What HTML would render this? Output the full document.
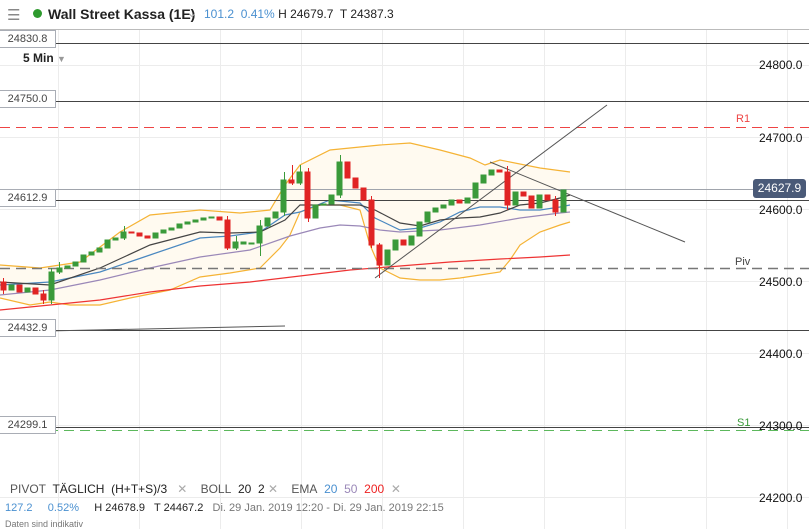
<!DOCTYPE html><html><head><meta charset="utf-8"><style>
body{margin:0;width:809px;height:529px;overflow:hidden;background:#fff;font-family:"Liberation Sans",sans-serif;position:relative}
.t{position:absolute;white-space:nowrap}
.lb{position:absolute;left:-1px;width:55px;height:16px;border:1px solid #a9adb5;background:#fff;font-size:11px;color:#444;text-align:center;line-height:16px}
.ax{position:absolute;left:759px;font-size:12px;color:#111}
</style></head><body>
<svg width="809" height="529" style="position:absolute;left:0;top:0">
<g stroke="#ececec" stroke-width="1">
<line x1="58.5" y1="29" x2="58.5" y2="529"/><line x1="139.5" y1="29" x2="139.5" y2="529"/><line x1="220.5" y1="29" x2="220.5" y2="529"/><line x1="301.5" y1="29" x2="301.5" y2="529"/><line x1="382.5" y1="29" x2="382.5" y2="529"/><line x1="463.5" y1="29" x2="463.5" y2="529"/><line x1="544.5" y1="29" x2="544.5" y2="529"/><line x1="625.5" y1="29" x2="625.5" y2="529"/><line x1="706.5" y1="29" x2="706.5" y2="529"/><line x1="787.5" y1="29" x2="787.5" y2="529"/>
<line x1="0" y1="65.5" x2="809" y2="65.5"/><line x1="0" y1="137.5" x2="809" y2="137.5"/><line x1="0" y1="209.5" x2="809" y2="209.5"/><line x1="0" y1="281.5" x2="809" y2="281.5"/><line x1="0" y1="353.5" x2="809" y2="353.5"/><line x1="0" y1="425.5" x2="809" y2="425.5"/><line x1="0" y1="497.5" x2="809" y2="497.5"/>
</g>
<line x1="0" y1="29.5" x2="809" y2="29.5" stroke="#bbb"/>
<polygon fill="#fffaf0" points="0,265 40,268 80,262 120,232 150,215 200,210 240,213 270,210 285,185 300,165 330,150 380,145 410,143 440,150 470,158 485,165 500,160 540,168 570,172 570,222 560,225 540,232 520,245 510,260 500,272 480,275 460,278 440,280 420,280 400,278 380,268 370,245 360,210 340,205 320,205 300,212 290,235 280,248 260,268 230,273 200,277 170,290 130,298 100,305 70,305 50,302 30,305 0,298"/>
<g fill="none" stroke-width="1.2">
<polyline stroke="#f5b335" points="0,265 40,268 80,262 120,232 150,215 200,210 240,213 270,210 285,185 300,165 330,150 380,145 410,143 440,150 470,158 485,165 500,160 540,168 570,172"/>
<polyline stroke="#f5b335" points="0,298 30,305 50,302 70,305 100,305 130,298 170,290 200,277 230,273 260,268 280,248 290,235 300,212 320,205 340,205 360,210 370,245 380,268 400,278 420,280 440,280 460,278 480,275 500,272 510,260 520,245 540,232 560,225 570,222"/>
<polyline stroke="#ee3333" points="0,310 50,305 100,300 150,292 200,286 250,282 300,276 350,270 400,266 450,262 500,259 540,257 570,255"/>
<polyline stroke="#9a88b8" points="0,295 50,290 100,280 150,268 200,257 250,250 290,236 320,228 340,225 360,226 380,230 400,232 440,230 480,225 520,218 560,213 570,212"/>
<polyline stroke="#4a88c0" points="0,285 50,282 100,272 150,255 200,238 230,236 260,232 285,215 300,212 330,200 360,203 375,218 400,230 420,228 440,222 460,212 480,207 500,207 520,210 540,210 560,207 570,205"/>
<polyline stroke="#444" points="0,282 50,285 100,268 150,245 200,232 230,233 260,232 285,220 300,205 330,205 360,205 375,210 400,223 420,226 440,220 460,218 480,217 500,213 520,205 540,203 560,198 570,195"/>
</g>
<g stroke="#444" stroke-width="1">
<line x1="0" y1="43.5" x2="809" y2="43.5"/><line x1="0" y1="101.5" x2="809" y2="101.5"/><line x1="0" y1="200.5" x2="809" y2="200.5"/><line x1="0" y1="330.5" x2="809" y2="330.5"/><line x1="0" y1="427.5" x2="809" y2="427.5"/>
</g>
<line x1="0" y1="189.5" x2="753" y2="189.5" stroke="#a0a4ac"/>
<line x1="0" y1="127.5" x2="809" y2="127.5" stroke="#ee4444" stroke-dasharray="10,6"/>
<line x1="0" y1="268.5" x2="809" y2="268.5" stroke="#777" stroke-dasharray="10,6" stroke-width="1.5"/>
<line x1="0" y1="430.5" x2="809" y2="430.5" stroke="#5cb85c" stroke-dasharray="10,6"/>
<g stroke="#555" stroke-width="1">
<line x1="375" y1="278" x2="607" y2="105"/><line x1="490" y1="162" x2="685" y2="242"/><line x1="0" y1="332" x2="285" y2="326"/>
</g>
<g stroke-width="1">
<g stroke="#3a9a3a">
<line x1="51.5" y1="268" x2="51.5" y2="304"/><line x1="59.5" y1="262" x2="59.5" y2="274"/><line x1="124.5" y1="226" x2="124.5" y2="240"/><line x1="236.5" y1="236" x2="236.5" y2="250"/><line x1="260.5" y1="220" x2="260.5" y2="256"/><line x1="284.5" y1="172" x2="284.5" y2="216"/><line x1="300.5" y1="165" x2="300.5" y2="185"/><line x1="340.5" y1="155" x2="340.5" y2="198"/>
</g>
<g stroke="#e02424">
<line x1="3.5" y1="278" x2="3.5" y2="294"/><line x1="43.5" y1="290" x2="43.5" y2="304"/><line x1="227.5" y1="216" x2="227.5" y2="250"/><line x1="292.5" y1="165" x2="292.5" y2="185"/><line x1="308.5" y1="168" x2="308.5" y2="222"/><line x1="371.5" y1="196" x2="371.5" y2="248"/><line x1="379.5" y1="243" x2="379.5" y2="278"/><line x1="507.5" y1="166" x2="507.5" y2="210"/><line x1="555.5" y1="196" x2="555.5" y2="216"/>
</g>
<g fill="#e02424" stroke="#e02424">
<rect x="1" y="282" width="5" height="8"/><rect x="17" y="285" width="5" height="7"/><rect x="33" y="288" width="5" height="6"/><rect x="41" y="294" width="5" height="6"/>
<rect x="129" y="232" width="5" height="1"/><rect x="137" y="233" width="5" height="3"/><rect x="145" y="236" width="5" height="2"/>
<rect x="217" y="217" width="5" height="3"/><rect x="225" y="220" width="5" height="28"/>
<rect x="289" y="180" width="5" height="3"/><rect x="305" y="172" width="5" height="46"/>
<rect x="345" y="162" width="5" height="16"/><rect x="353" y="178" width="5" height="10"/><rect x="361" y="188" width="5" height="12"/><rect x="369" y="200" width="5" height="45"/><rect x="377" y="245" width="5" height="20"/>
<rect x="401" y="240" width="5" height="5"/><rect x="457" y="200" width="5" height="3"/><rect x="497" y="170" width="5" height="2"/><rect x="505" y="172" width="5" height="33"/>
<rect x="521" y="192" width="5" height="4"/><rect x="529" y="196" width="5" height="12"/><rect x="545" y="195" width="5" height="5"/><rect x="553" y="200" width="5" height="12"/>
</g>
<g fill="#3a9a3a" stroke="#3a9a3a">
<rect x="9" y="285" width="5" height="5"/><rect x="25" y="288" width="5" height="4"/><rect x="49" y="272" width="5" height="28"/><rect x="57" y="268" width="5" height="4"/><rect x="65" y="266" width="5" height="2"/><rect x="73" y="262" width="5" height="4"/><rect x="81" y="255" width="5" height="7"/><rect x="89" y="252" width="5" height="3"/><rect x="97" y="248" width="5" height="4"/><rect x="105" y="240" width="5" height="8"/><rect x="113" y="238" width="5" height="2"/><rect x="121" y="232" width="5" height="6"/>
<rect x="153" y="233" width="5" height="5"/><rect x="161" y="230" width="5" height="3"/><rect x="169" y="228" width="5" height="2"/><rect x="177" y="224" width="5" height="4"/><rect x="185" y="222" width="5" height="2"/><rect x="193" y="220" width="5" height="2"/><rect x="201" y="218" width="5" height="2"/><rect x="209" y="217" width="5" height="1"/>
<rect x="233" y="242" width="5" height="6"/><rect x="241" y="242" width="5" height="2"/><rect x="249" y="243" width="5" height="1"/><rect x="257" y="226" width="5" height="17"/><rect x="265" y="218" width="5" height="8"/><rect x="273" y="212" width="5" height="6"/><rect x="281" y="180" width="5" height="32"/><rect x="297" y="172" width="5" height="11"/>
<rect x="313" y="205" width="5" height="13"/><rect x="321" y="204" width="5" height="1"/><rect x="329" y="195" width="5" height="9"/><rect x="337" y="162" width="5" height="33"/>
<rect x="385" y="250" width="5" height="15"/><rect x="393" y="240" width="5" height="10"/><rect x="409" y="236" width="5" height="9"/><rect x="417" y="222" width="5" height="14"/><rect x="425" y="212" width="5" height="10"/><rect x="433" y="208" width="5" height="4"/><rect x="441" y="205" width="5" height="3"/><rect x="449" y="200" width="5" height="5"/><rect x="465" y="198" width="5" height="5"/><rect x="473" y="183" width="5" height="15"/><rect x="481" y="175" width="5" height="8"/><rect x="489" y="170" width="5" height="5"/>
<rect x="513" y="192" width="5" height="13"/><rect x="537" y="195" width="5" height="13"/><rect x="561" y="190" width="5" height="22"/>
</g>
</g>
</svg>
<div class="t" style="left:7px;top:6px;font-size:15px;color:#888">&#9776;</div>
<div class="t" style="left:33px;top:9px;width:9px;height:9px;border-radius:50%;background:#2e9a2e"></div>
<div class="t" style="left:48px;top:6px;font-size:14px;font-weight:bold;color:#222">Wall Street Kassa (1E)</div>
<div class="t" style="left:187px;top:6px;font-size:12px;color:#aaa">&#8964;</div>
<div class="t" style="left:204px;top:7px;font-size:12px;color:#4a90d0">101.2&nbsp; 0.41% <span style="color:#222">H 24679.7&nbsp; T 24387.3</span></div>
<div class="lb" style="top:30px">24830.8</div>
<div class="t" style="left:23px;top:51px;font-size:12px;font-weight:bold;color:#222">5 Min <span style="color:#999;font-size:9px">&#9660;</span></div>
<div class="lb" style="top:90px">24750.0</div>
<div class="lb" style="top:189px">24612.9</div>
<div class="lb" style="top:319px">24432.9</div>
<div class="lb" style="top:416px">24299.1</div>
<div class="ax" style="top:58px">24800.0</div>
<div class="ax" style="top:131px">24700.0</div>
<div class="ax" style="top:203px">24600.0</div>
<div class="ax" style="top:275px">24500.0</div>
<div class="ax" style="top:347px">24400.0</div>
<div class="ax" style="top:419px">24300.0</div>
<div class="ax" style="top:491px">24200.0</div>
<div class="t" style="left:753px;top:179px;width:53px;height:19px;background:#4a5a78;border-radius:3px;color:#fff;font-size:12px;line-height:19px;text-align:center">24627.9</div>
<div class="t" style="left:736px;top:113px;font-size:11px;color:#e44">R1</div>
<div class="t" style="left:735px;top:256px;font-size:11px;color:#444">Piv</div>
<div class="t" style="left:737px;top:417px;font-size:11px;color:#3a9a3a">S1</div>
<div class="t" style="left:10px;top:482px;font-size:12px;color:#555">PIVOT&nbsp; <span style="color:#222">TÄGLICH&nbsp; (H+T+S)/3</span>&nbsp;&nbsp; <span style="color:#aaa">✕</span>&nbsp;&nbsp;&nbsp; BOLL&nbsp; <span style="color:#222">20&nbsp; 2</span> <span style="color:#aaa">✕</span>&nbsp;&nbsp;&nbsp; EMA&nbsp; <span style="color:#4a90d0">20</span>&nbsp; <span style="color:#9a88b8">50</span>&nbsp; <span style="color:#e22">200</span>&nbsp; <span style="color:#aaa">✕</span></div>
<div class="t" style="left:5px;top:502px;font-size:11px;color:#4a90d0">127.2&nbsp;&nbsp;&nbsp;&nbsp; 0.52%&nbsp;&nbsp;&nbsp;&nbsp; <span style="color:#222">H 24678.9&nbsp;&nbsp; T 24467.2</span>&nbsp;&nbsp; <span style="color:#777">Di. 29 Jan. 2019 12:20 - Di. 29 Jan. 2019 22:15</span></div>
<div class="t" style="left:5px;top:519px;font-size:9px;color:#777">Daten sind indikativ</div>
</body></html>
